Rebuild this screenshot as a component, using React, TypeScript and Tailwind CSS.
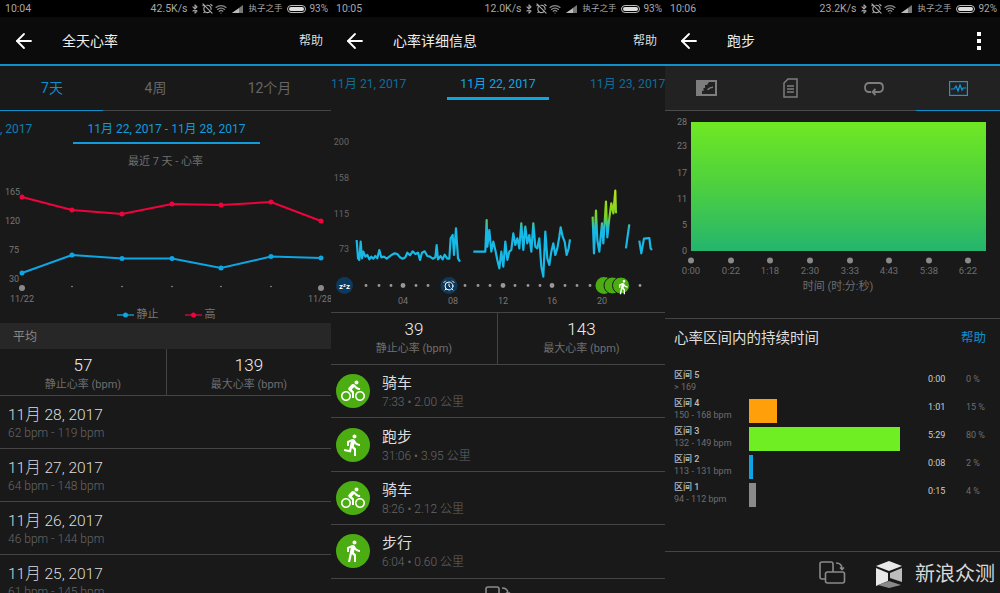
import { ArrowLeft, Bluetooth, AlarmClockOff, Wifi, AlarmClock } from 'lucide-react';
import { MdDirectionsBike, MdDirectionsRun, MdDirectionsWalk } from 'react-icons/md';
import type { ReactNode } from 'react';

function StatusBar({ time, speed, pct }: { time: string; speed: string; pct: string }) {
  return (
    <div className="flex h-[17px] items-center justify-between bg-black pl-[5px] pr-[3px] text-[10.5px] text-[#a8a8a8]">
      <span>{time}</span>
      <div className="flex items-center">
        <span className="text-[10.5px]">{speed}</span>
        <Bluetooth size={10} strokeWidth={2.5} className="ml-[3px]" />
        <AlarmClockOff size={11} strokeWidth={2.5} className="ml-[2px]" />
        <Wifi size={12} strokeWidth={2.5} className="ml-[2px] text-[#888]" />
        <svg width="11" height="8" viewBox="0 0 11 8" className="ml-[5px]">
          <path d="M0 8 L11 8 L11 0 Z" fill="#777" />
          <path d="M0 8 L7 8 L7 3.2 Z" fill="#bbb" />
        </svg>
        <span className="ml-[5px] text-[8.5px]">执子之手</span>
        <div className="ml-[5px] flex h-[8px] w-[19px] items-center rounded-[4px] border border-[#bbb] p-[1px]">
          <div className="h-full w-[15px] rounded-[3px] bg-[#ddd]" />
        </div>
        <span className="ml-[3px] text-[10px]">{pct}</span>
      </div>
    </div>
  );
}

function Header({ title, right }: { title: string; right: ReactNode }) {
  return (
    <div className="flex h-[49px] items-center border-b-2 border-[#0f8fcb] bg-[#0b0b0b] pl-[12px] pr-[8px]">
      <ArrowLeft size={24} strokeWidth={1.8} className="text-white" />
      <span className="ml-[26px] flex-1 pt-[1px] text-[14px] text-[#eee]">{title}</span>
      {right}
    </div>
  );
}

function Help() {
  return <span className="pt-[1px] text-[12px] text-[#ddd]">帮助</span>;
}

function Stats({ a, b, className }: { a: string; b: string; className: string }) {
  return (
    <div className={`grid grid-cols-[167px_1fr] border-b border-[#444] ${className}`}>
      <div className="flex flex-col items-center border-r border-[#444] pt-[6px]">
        <span className="text-[17px] leading-[20px] font-light text-[#eee]">{a}</span>
        <span className="text-[11px] leading-[20px] text-[#6e6e6e]">静止心率 (bpm)</span>
      </div>
      <div className="flex flex-col items-center pt-[6px]">
        <span className="text-[17px] leading-[20px] font-light text-[#eee]">{b}</span>
        <span className="text-[11px] leading-[20px] text-[#6e6e6e]">最大心率 (bpm)</span>
      </div>
    </div>
  );
}

function RotateIcon() {
  return (
    <svg width="27" height="23" viewBox="0 0 27 23" fill="none" stroke="#8a8a8a" strokeWidth="1.6">
      <rect x="1" y="1" width="13" height="17" rx="2" />
      <rect x="6.5" y="11" width="19" height="11" rx="2" fill="#191919" />
      <path d="M17 2 C21 2 23 4 23 8 M21 6.5 L23 8.5 L25 6.5" />
    </svg>
  );
}

const red = '22,197 72,210 122,214 172,204 221,205 271,202 321,221';
const blue = '22,273 72,255 122,258.5 172,258.5 221,268 271,256.5 321,258';

function WeekChart() {
  const pts = (s: string) => s.split(' ').map((p) => p.split(',').map(Number));
  return (
    <svg width="331" height="133" viewBox="0 172 331 133" className="block">
      {[
        ['165', 195],
        ['120', 224],
        ['75', 253],
        ['30', 282],
      ].map(([t, y]) => (
        <text key={t} x={t === '75' || t === '30' ? 9 : 5} y={y} className="fill-[#777] text-[9px]">
          {t}
        </text>
      ))}
      <polyline points={red} fill="none" stroke="#f0033c" strokeWidth="2" />
      {pts(red).map(([x, y]) => (
        <circle key={x} cx={x} cy={y} r="2.5" fill="#f0033c" />
      ))}
      <polyline points={blue} fill="none" stroke="#0ea5e4" strokeWidth="2" />
      {pts(blue).map(([x, y]) => (
        <circle key={x} cx={x} cy={y} r="2.5" fill="#0ea5e4" />
      ))}
      {[72, 122, 172, 221, 271].map((x) => (
        <circle key={x} cx={x} cy="286.5" r="0.8" fill="#999" />
      ))}
      <circle cx="22" cy="288" r="3" fill="#8a8a8a" />
      <circle cx="321" cy="288" r="3" fill="#8a8a8a" />
      <text x="22" y="302" textAnchor="middle" className="fill-[#777] text-[9px]">
        11/22
      </text>
      <text x="320" y="302" textAnchor="middle" className="fill-[#777] text-[9px]">
        11/28
      </text>
    </svg>
  );
}

function Panel1() {
  const days = [
    ['11月 28, 2017', '62 bpm - 119 bpm'],
    ['11月 27, 2017', '64 bpm - 148 bpm'],
    ['11月 26, 2017', '46 bpm - 144 bpm'],
    ['11月 25, 2017', '61 bpm - 145 bpm'],
  ];
  return (
    <div className="h-[593px] w-[331px] shrink-0 overflow-hidden bg-[#191919]">
      <StatusBar time="10:04" speed="42.5K/s" pct="93%" />
      <Header title="全天心率" right={<Help />} />
      <div className="relative grid h-[45px] grid-cols-[103px_105px_123px] items-center border-b border-[#444] pt-[1px] text-center text-[14px] text-[#666]">
        <span className="pl-[1px] text-[#0f8fcb]">7天</span>
        <span>4周</span>
        <span>12个月</span>
        <div className="absolute bottom-[-1px] left-0 h-[1px] w-[103px] bg-[#0f8fcb]" />
      </div>
      <div className="flex h-[34px] text-[12px] text-[#0c7fb5]">
        <span className="w-[73px] pt-[9px]">, 2017</span>
        <span className="mb-[1px] h-[33px] w-[187px] border-b-2 border-[#0f9bdc] pt-[9px] text-center text-[#0f9bdc]">
          11月 22, 2017 - 11月 28, 2017
        </span>
      </div>
      <div className="h-[27px] pt-[9px] text-center text-[11px] leading-[16px] text-[#6e6e6e]">最近 7 天 - 心率</div>
      <WeekChart />
      <div className="flex h-[18px] items-center justify-center gap-[26px] pt-[2px] pl-[1px] text-[11px] text-[#777]">
        <div className="flex items-center gap-[3px]">
          <svg width="17" height="6" viewBox="0 0 17 6">
            <path d="M0 3 H17" stroke="#0ea5e4" strokeWidth="1.3" />
            <circle cx="8.5" cy="3" r="2.5" fill="#0ea5e4" />
          </svg>
          静止
        </div>
        <div className="flex items-center gap-[3px]">
          <svg width="17" height="6" viewBox="0 0 17 6">
            <path d="M0 3 H17" stroke="#f0033c" strokeWidth="1.3" />
            <circle cx="8.5" cy="3" r="2.5" fill="#f0033c" />
          </svg>
          高
        </div>
      </div>
      <div className="flex h-[26px] items-center bg-[#272727] pt-[1px] pl-[13px] text-[12px] text-[#888]">平均</div>
      <Stats a="57" b="139" className="h-[47px]" />
      {days.map(([d, r]) => (
        <div key={d} className="flex h-[53px] flex-col border-b border-[#444] pt-[9px] pl-[8px]">
          <span className="text-[15.5px] leading-[20px] font-light text-[#ddd]">{d}</span>
          <span className="text-[12px] leading-[17px] font-light text-[#666]">{r}</span>
        </div>
      ))}
    </div>
  );
}

const traces = [
  '80,180 84,235 88,240 92,185 96,235 100,215 106,230 112,225 118,238 124,230 130,236 136,228 142,235 148,210 154,232 162,230 170,236 178,230 186,224 194,220 202,222 210,232 218,236 226,232 232,218 240,226 248,214 256,222 264,218 270,240 276,218 284,214 292,228 300,230 308,236 316,232 320,195 324,238 332,228 338,238 344,224 352,236 358,236 362,175 368,165 372,225 378,145 384,235 390,245',
  '430,215 466,215 470,120 472,200 478,150 484,215 490,185 496,210 502,240 508,265 514,215 520,260 526,185 532,240 538,215 544,210 550,160 556,195 562,175 568,205 574,130 580,210 586,140 592,190 598,165 604,215 610,130 616,200 622,205 628,175 634,260 640,290 646,155 652,235 658,255 664,215 670,190 676,225 682,205 688,170 692,142 698,170 704,185 710,225 716,205 720,178',
  '788,110 792,220 798,92 802,180 808,215 816,130 820,190 828,65 832,172 838,115 844,70 850,100 856,32 858,100',
  '888,205 892,175 898,133',
  '928,182 934,220 942,176 950,175 958,174 962,205 966,210',
];

function DayChart() {
  return (
    <svg width="334" height="212" viewBox="331 100 334 212" className="block">
      <defs>
        <linearGradient id="hr" gradientUnits="userSpaceOnUse" x1="0" y1="30" x2="0" y2="170">
          <stop offset="0" stopColor="#b9e416" />
          <stop offset="0.55" stopColor="#7bd31f" />
          <stop offset="0.85" stopColor="#17b9e6" />
          <stop offset="1" stopColor="#17b9e6" />
        </linearGradient>
      </defs>
      {[
        ['200', 145],
        ['158', 181],
        ['115', 217],
        ['73', 252],
      ].map(([t, y]) => (
        <text key={t} x="349" y={y} textAnchor="end" className="fill-[#666] text-[9px]">
          {t}
        </text>
      ))}
      <g transform="translate(330 180) scale(0.3333)">
        {traces.map((t) => (
          <polyline key={t} points={t} fill="none" stroke="url(#hr)" strokeWidth="6.5" strokeLinejoin="round" />
        ))}
      </g>
      {[366, 379, 391, 416, 428, 465, 478, 490, 515, 528, 540, 565, 577, 590, 640].map((x) => (
        <circle key={x} cx={x} cy="285.5" r="1.4" fill="#999" />
      ))}
      {[403, 503, 552].map((x) => (
        <circle key={x} cx={x} cy="285.5" r="2.4" fill="#999" />
      ))}
      <circle cx="344.5" cy="285.5" r="8.5" fill="#0d3a5c" />
      <text x="344.5" y="288.5" textAnchor="middle" className="fill-white text-[8px] font-bold">
        zᶻz
      </text>
      <circle cx="449" cy="285.5" r="8.5" fill="#0d3a5c" />
      <AlarmClock x={443} y={279.5} width={12} height={12} color="#fff" strokeWidth={2} />
      <circle cx="604" cy="285.5" r="8.5" fill="#4cad12" />
      <circle cx="612.5" cy="285.5" r="8.5" fill="#4cad12" stroke="#191919" strokeWidth="1" />
      <circle cx="621" cy="285.5" r="8.5" fill="#4cad12" stroke="#191919" strokeWidth="1" />
      <MdDirectionsWalk x={615} y={279} width={13} height={13} color="#fff" />
      {[
        ['04', 403],
        ['08', 453],
        ['12', 503],
        ['16', 552],
        ['20', 602],
      ].map(([t, x]) => (
        <text key={t} x={x} y="304" textAnchor="middle" className="fill-[#777] text-[9px]">
          {t}
        </text>
      ))}
    </svg>
  );
}

function Panel2() {
  const items = [
    { name: '骑车', sub: '7:33 • 2.00 公里', Icon: MdDirectionsBike },
    { name: '跑步', sub: '31:06 • 3.95 公里', Icon: MdDirectionsRun },
    { name: '骑车', sub: '8:26 • 2.12 公里', Icon: MdDirectionsBike },
    { name: '步行', sub: '6:04 • 0.60 公里', Icon: MdDirectionsWalk },
  ];
  return (
    <div className="h-[593px] w-[334px] shrink-0 overflow-hidden bg-[#191919]">
      <StatusBar time="10:05" speed="12.0K/s" pct="93%" />
      <Header title="心率详细信息" right={<Help />} />
      <div className="flex h-[34px] text-[12.2px] text-[#0c6d9c]">
        <span className="w-[116px] shrink-0 pt-[9px] whitespace-nowrap">11月 21, 2017</span>
        <span className="h-[34px] w-[102px] shrink-0 border-b-[3px] border-[#0ea5e4] pt-[9px] text-center whitespace-nowrap text-[#0ea5e4]">
          11月 22, 2017
        </span>
        <span className="min-w-0 flex-1 pt-[9px] pl-[41px] whitespace-nowrap">11月 23, 2017</span>
      </div>
      <DayChart />
      <div className="border-t border-[#444]">
        <Stats a="39" b="143" className="h-[52px]" />
      </div>
      {items.map((it, i) => (
        <div key={i} className="flex h-[53.4px] items-center border-b border-[#444] pl-[5px]">
          <div className="flex h-[34px] w-[34px] items-center justify-center rounded-full bg-[#4cad12]">
            <it.Icon size={24} className="text-white" />
          </div>
          <div className="ml-[12px] flex flex-col pt-[2px]">
            <span className="text-[15px] leading-[20px] text-[#ddd]">{it.name}</span>
            <span className="text-[12px] leading-[18px] font-light text-[#666]">{it.sub}</span>
          </div>
        </div>
      ))}
      <div className="pt-[7px] pl-[154px]">
        <RotateIcon />
      </div>
    </div>
  );
}

function ActivityChart() {
  const xs = [691, 731, 770, 810, 850, 889, 929, 968];
  const labels = ['0:00', '0:22', '1:18', '2:30', '3:33', '4:43', '5:38', '6:22'];
  return (
    <svg width="335" height="207" viewBox="665 111 335 207" className="block">
      <defs>
        <linearGradient id="area" x1="0" y1="0" x2="0" y2="1">
          <stop offset="0" stopColor="#6fe823" />
          <stop offset="0.5" stopColor="#4dd03f" />
          <stop offset="1" stopColor="#24b56e" />
        </linearGradient>
      </defs>
      {[
        ['28', 125],
        ['23', 149],
        ['17', 176],
        ['11', 202],
        ['5', 228],
        ['0', 254],
      ].map(([t, y]) => (
        <text key={t} x="687" y={y} textAnchor="end" className="fill-[#777] text-[9px]">
          {t}
        </text>
      ))}
      <rect x="691" y="122" width="295" height="129" fill="url(#area)" />
      {xs.map((x, i) => (
        <g key={x}>
          <circle cx={x} cy="260.5" r="3" fill="#8a8a8a" />
          <text x={x} y="274" textAnchor="middle" className="fill-[#6e6e6e] text-[9.5px]">
            {labels[i]}
          </text>
        </g>
      ))}
      <text x="838" y="290" textAnchor="middle" className="fill-[#6e6e6e] text-[11px]">
        时间 (时:分:秒)
      </text>
    </svg>
  );
}

function TabIcons() {
  return (
    <div className="relative grid h-[45px] grid-cols-4 items-center justify-items-center border-b border-[#4a4a4a] bg-[#222]">
      <svg width="21" height="16" viewBox="0 0 21 16">
        <rect x="1" y="1" width="19" height="14" fill="none" stroke="#7d7d7d" strokeWidth="2" />
        <path d="M2 2 H13 L11 5 H9 V8 H7.5 V11 H6 V14 H2 Z" fill="#7d7d7d" />
        <path d="M11 10 Q12 7 17 6.5 L17 8 Q14 8 12.5 10 Z" fill="#7d7d7d" />
      </svg>
      <svg width="15" height="20" viewBox="0 0 15 20" fill="none" stroke="#7d7d7d" strokeWidth="1.5">
        <path d="M5 1 H14 V19 H1 V5 Z" />
        <path d="M4 8 H11 M4 11 H11 M4 14 H11" />
      </svg>
      <svg width="20" height="15" viewBox="0 0 20 15" fill="none" stroke="#7d7d7d" strokeWidth="1.8">
        <path d="M7 11 H5 C2.500 11 1 9.300 1 6.500 C1 3.500 2.500 2 5 2 H15 C17.500 2 19 3.500 19 6.500 C19 9.300 17.500 11 15 11 H9" />
        <path d="M11.500 8 L8.500 11 L11.500 14" />
      </svg>
      <svg width="19" height="15" viewBox="0 0 19 15" fill="none" stroke="#0f9bdc" strokeWidth="1.2">
        <rect x="0.600" y="0.600" width="17.800" height="13.800" />
        <path d="M2 8 H5 L7 5 L9 10 L11 4 L13 9 L14 7 H17" />
      </svg>
      <div className="absolute right-0 bottom-[-1px] h-[1px] w-[84px] bg-[#0f8fcb]" />
    </div>
  );
}

function Panel3() {
  const zones = [
    { z: '区间 5', r: '> 169', t: '0:00', p: '0 %', w: 'w-0', c: '' },
    { z: '区间 4', r: '150 - 168 bpm', t: '1:01', p: '15 %', w: 'w-[28px]', c: 'bg-[#ff9f0a]' },
    { z: '区间 3', r: '132 - 149 bpm', t: '5:29', p: '80 %', w: 'w-[151px]', c: 'bg-[#6fee23]' },
    { z: '区间 2', r: '113 - 131 bpm', t: '0:08', p: '2 %', w: 'w-[4px]', c: 'bg-[#0ea5e4]' },
    { z: '区间 1', r: '94 - 112 bpm', t: '0:15', p: '4 %', w: 'w-[7px]', c: 'bg-[#8a8a8a]' },
  ];
  return (
    <div className="flex h-[593px] w-[335px] shrink-0 flex-col overflow-hidden bg-[#191919]">
      <StatusBar time="10:06" speed="23.2K/s" pct="92%" />
      <Header
        title="跑步"
        right={
          <div className="mr-[11px] flex flex-col gap-[3px]">
            <div className="h-[4px] w-[4px] bg-white" />
            <div className="h-[4px] w-[4px] bg-white" />
            <div className="h-[4px] w-[4px] bg-white" />
          </div>
        }
      />
      <TabIcons />
      <ActivityChart />
      <div className="flex h-[39px] items-center justify-between border-t border-[#444] pt-[1px] pr-[14px] pl-[9px]">
        <span className="text-[14.5px] text-[#ddd]">心率区间内的持续时间</span>
        <span className="text-[12.5px] text-[#0f8fcb]">帮助</span>
      </div>
      <div className="flex flex-col pt-[12px]">
        {zones.map((z) => (
          <div key={z.z} className="grid h-[28px] grid-cols-[75px_179px_38px_1fr] items-center pl-[9px] text-[9px]">
            <div className="flex flex-col pb-[3px] leading-[11.5px] whitespace-nowrap">
              <span className="font-medium text-[#bbb]">{z.z}</span>
              <span className="text-[#6e6e6e]">{z.r}</span>
            </div>
            <div className={`h-[24px] ${z.w} ${z.c}`} />
            <span className="pb-[6px] text-[#ccc]">{z.t}</span>
            <span className="pb-[6px] text-[#6e6e6e]">{z.p}</span>
          </div>
        ))}
      </div>
      <div className="mt-auto flex h-[42px] items-start border-t border-[#444] pt-[9px] pl-[154px]">
        <RotateIcon />
        <svg width="28" height="27" viewBox="0 0 28 27" className="ml-[29px]">
          <path d="M14 0 L27 5 L14 10 L1 5 Z" fill="#e8e8e8" />
          <path d="M1 7 L13 12 L13 20 L1 25 Z" fill="#e8e8e8" />
          <path d="M15 12 L27 7 L27 21 L15 17 Z" fill="#bdbdbd" />
          <path d="M14 20 L26 24 L14 27 L3 24 Z" fill="#8a8a8a" />
        </svg>
        <span className="ml-[12px] text-[20px] leading-[26px] whitespace-nowrap text-[#d8d8d8]">新浪众测</span>
      </div>
    </div>
  );
}

export default function App() {
  return (
    <div className="flex h-[593px] w-[1000px] overflow-hidden bg-[#191919] font-[family-name:Roboto,'Noto_Sans_CJK_SC',sans-serif]">
      <Panel1 />
      <Panel2 />
      <Panel3 />
    </div>
  );
}
